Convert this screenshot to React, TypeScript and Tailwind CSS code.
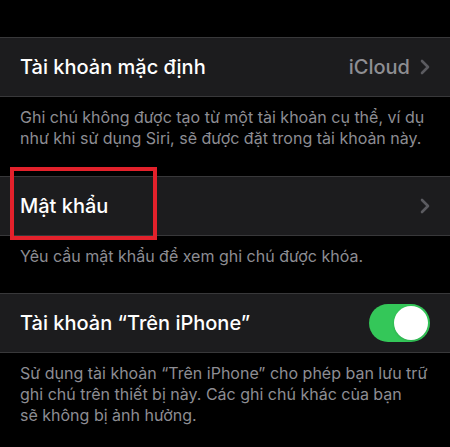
import { useState } from "react";

const font = { fontFamily: "Inter, 'Noto Sans', sans-serif" };

const Chevron = () => (
  <svg width="10" height="16" viewBox="0 0 10 16" fill="none" className="ml-[10px]">
    <path d="M2 2l6 6-6 6" stroke="#5b5b60" strokeWidth="2.6" strokeLinecap="round" strokeLinejoin="round" />
  </svg>
);

const Toggle = ({ on, onChange }: { on: boolean; onChange: () => void }) => (
  <button
    onClick={onChange}
    className={`flex h-[38px] w-[61px] items-center rounded-full p-[2px] ${on ? "bg-[#34c759] justify-end" : "bg-[#39393d] justify-start"}`}
  >
    <span className="block h-[34px] w-[34px] rounded-full bg-white shadow" />
  </button>
);

const Row = ({ children }: { children: React.ReactNode }) => (
  <div className="flex h-[60px] items-center border-y border-[#38383a] bg-[#1c1c1e] pl-[20px] pr-[20px]">
    {children}
  </div>
);

const Footer = ({ children }: { children: React.ReactNode }) => (
  <p className="px-[20px] pt-[10px] text-[16px] leading-[21px] text-[#8d8d93]">{children}</p>
);

export default function App() {
  const [onDevice, setOnDevice] = useState(true);

  return (
    <div className="h-[447px] w-[450px] overflow-hidden bg-black" style={font}>
      <div className="h-[37px]" />

      {/* Default account */}
      <Row>
        <span className="flex-1 text-[20px] font-[450] text-white">Tài khoản mặc định</span>
        <span className="text-[20px] font-[450] text-[#8e8e93]">iCloud</span>
        <Chevron />
      </Row>
      <Footer>
        Ghi chú không được tạo từ một tài khoản cụ thể, ví dụ như khi sử dụng Siri, sẽ được đặt trong tài khoản này.
      </Footer>

      {/* Password */}
      <div className="relative mt-[27px]">
        <Row>
          <span className="flex-1 text-[20px] font-[450] text-white">Mật khẩu</span>
          <Chevron />
        </Row>
        <div className="pointer-events-none absolute left-[10px] top-[-9px] h-[73px] w-[147px] border-[4px] border-[#e3212b]" />
      </div>
      <Footer>Yêu cầu mật khẩu để xem ghi chú được khóa.</Footer>

      {/* On My iPhone account */}
      <div className="mt-[26px]">
        <Row>
          <span className="flex-1 text-[20px] font-[450] text-white">Tài khoản “Trên iPhone”</span>
          <Toggle on={onDevice} onChange={() => setOnDevice(!onDevice)} />
        </Row>
      </div>
      <Footer>
        Sử dụng tài khoản “Trên iPhone” cho phép bạn lưu trữ ghi chú trên thiết bị này. Các ghi chú khác của bạn
        <br />
        sẽ không bị ảnh hưởng.
      </Footer>
    </div>
  );
}
